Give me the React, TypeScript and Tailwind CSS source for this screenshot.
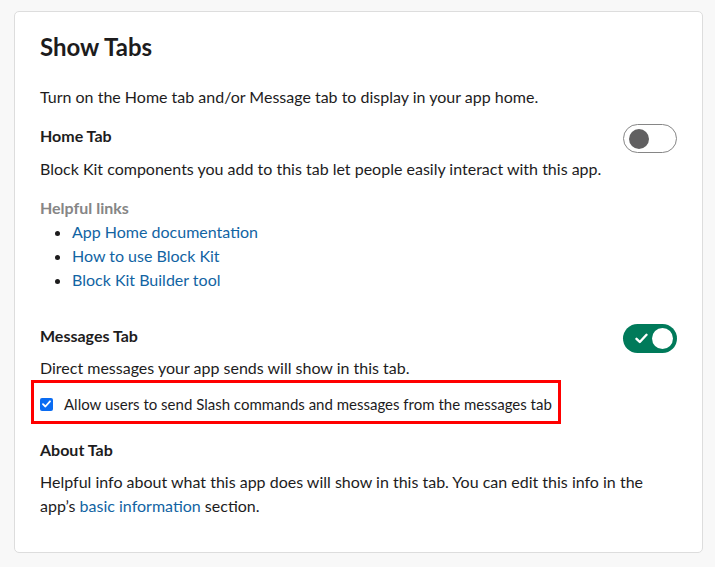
import React from "react";

function Toggle({ on }: { on: boolean }) {
  if (on) {
    return (
      <div className="w-[54px] h-[29px] rounded-full bg-[#007a5a] flex items-center justify-between pl-[12px] pr-[4px] shrink-0">
        <svg width="13" height="11" viewBox="0 0 13 11">
          <path d="M1.5 5.8 L4.8 9 L11.5 1.8" fill="none" stroke="#ffffff" strokeWidth="2.4" strokeLinecap="round" strokeLinejoin="round" />
        </svg>
        <div className="w-[21px] h-[21px] rounded-full bg-white" />
      </div>
    );
  }
  return (
    <div className="w-[54px] h-[29px] rounded-full border border-[#868686] bg-white flex items-center pl-[5px] shrink-0">
      <div className="w-[20px] h-[20px] rounded-full bg-[#616061]" />
    </div>
  );
}

export default function App() {
  return (
    <div
      className="min-h-[567px] bg-[#f8f8f8] pt-[11px] pl-[14px] pr-[12px] pb-[14px] text-[#1d1c1d]"
      style={{ fontFamily: "Lato, 'Noto Sans', sans-serif" }}
    >
      <div className="h-[542px] bg-white border border-[#dddddd] rounded-[5px] px-[25px] pt-[19px]">
        <h1 className="text-[24px] font-bold leading-[32px]">Show Tabs</h1>
        <p className="mt-[22px] text-[16px] leading-[24px]">
          Turn on the Home tab and/or Message tab to display in your app home.
        </p>

        <div className="mt-[15px] flex items-start justify-between">
          <div className="text-[16px] font-bold leading-[24px]">Home Tab</div>
          <Toggle on={false} />
        </div>
        <p className="mt-[4px] text-[16px] leading-[24px]">
          Block Kit components you add to this tab let people easily interact with this app.
        </p>

        <div className="mt-[15px] text-[16px] font-bold leading-[24px] text-[#868686]">Helpful links</div>
        <ul className="list-disc pl-[32px] text-[16px] leading-[24px] text-[#1264a3] marker:text-[#1d1c1d]">
          <li>App Home documentation</li>
          <li>How to use Block Kit</li>
          <li>Block Kit Builder tool</li>
        </ul>

        <div className="mt-[32px] flex items-start justify-between">
          <div className="text-[16px] font-bold leading-[24px]">Messages Tab</div>
          <Toggle on={true} />
        </div>
        <p className="mt-[3px] text-[16px] leading-[24px]">Direct messages your app sends will show in this tab.</p>

        <div className="-ml-[9px] w-[530px] h-[44px] border-[3px] border-[#ff0000] flex items-center pl-[6px] pt-[4px]">
          <div className="w-[13px] h-[13px] rounded-[2px] bg-[#0a6cf2] flex items-center justify-center shrink-0">
            <svg width="9" height="8" viewBox="0 0 9 8">
              <path d="M1 4.2 L3.4 6.5 L8 1.3" fill="none" stroke="#ffffff" strokeWidth="1.8" strokeLinecap="round" strokeLinejoin="round" />
            </svg>
          </div>
          <span className="ml-[11px] text-[15px] leading-[24px]">
            Allow users to send Slash commands and messages from the messages tab
          </span>
        </div>

        <div className="mt-[14px] text-[16px] font-bold leading-[24px]">About Tab</div>
        <div className="mt-[8px] max-w-[615px] text-[16px] leading-[24px]">
          <div>Helpful info about what this app does will show in this tab. You can edit this info in the</div>
          <div>
            app’s <span className="text-[#1264a3]">basic information</span> section.
          </div>
        </div>
      </div>
    </div>
  );
}
